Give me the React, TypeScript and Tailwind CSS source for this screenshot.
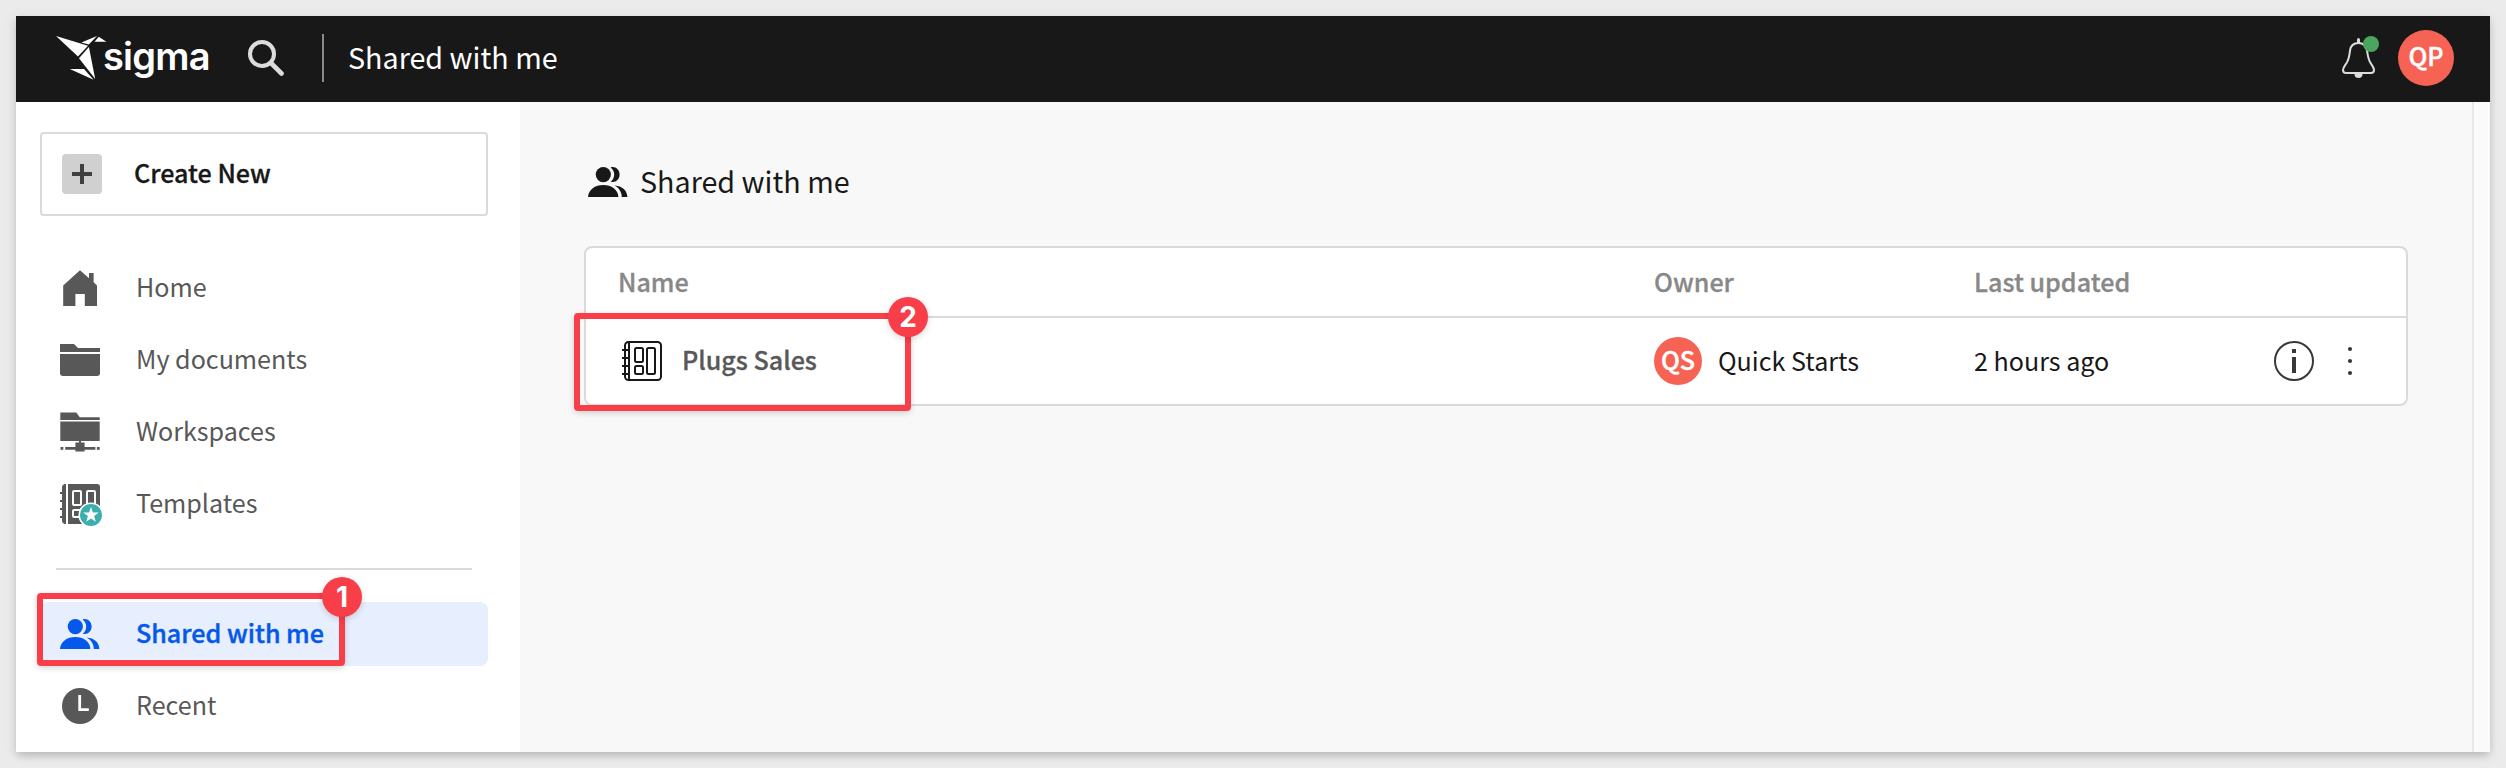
import type { ReactNode } from "react";

const GRAY = "#585858";

function SigmaBird() {
  return (
    <svg width="52" height="46" viewBox="0 0 52 46" fill="#fff">
      <path d="M0 0 L32 9.8 L22 20.6 Z" />
      <path d="M25.4 6.5 L41 0 L32.8 8.6 Z" />
      <path d="M42.7 0.7 L50.4 5.7 L38.6 5.7 Z" />
      <path d="M32.9 11 L39.2 43 L23 22.2 Z" />
      <path d="M13.8 33 L28 33 L37.6 43.7 Z" />
    </svg>
  );
}

function PeopleIcon({ color }: { color: string }) {
  return (
    <svg width="40" height="30" viewBox="0 0 40 30" fill={color}>
      <circle cx="15.3" cy="7.6" r="7.6" />
      <path d="M22.6 0.4 C27.5 -1 31.6 2.8 31.6 7.6 C31.6 12.6 27.4 16.2 22.8 14.8 C25 12.9 26.2 10.4 26.2 7.6 C26.2 4.7 25 2.2 22.6 0.4 Z" />
      <path d="M0 30 C0.5 22.5 7 18 15.3 18 C23.5 18 30 22.5 30.4 30 Z" />
      <path d="M26.6 18.6 C34.5 19.2 39 23.5 39.4 30 L33.8 30 C33.6 25 31 21 26.6 18.6 Z" />
    </svg>
  );
}

function HomeIcon() {
  return (
    <svg width="40" height="40" viewBox="0 0 40 40" fill={GRAY}>
      <path d="M20 2.2 L29 10.2 V5 H33.6 V14.2 L37 17.4 V38 H24.8 V26 H15.4 V38 H3.2 V17.4 Z" />
    </svg>
  );
}

function FolderIcon() {
  return (
    <svg width="40" height="40" viewBox="0 0 40 40" fill={GRAY}>
      <path d="M0 4 H14 L18 8 H40 V12 H0 Z" />
      <path d="M0 14 H40 V33 Q40 36 37 36 H3 Q0 36 0 33 Z" />
    </svg>
  );
}

function WorkspaceIcon() {
  return (
    <svg width="40" height="40" viewBox="0 0 40 40" fill={GRAY}>
      <path d="M0.3 0.4 H16.2 L19.8 5.2 H39.7 V8 H0.3 Z" />
      <path d="M0.3 9.6 H39.7 V29 H21 V30.4 H24.6 V35 H35.4 V37.8 H24.6 V39.6 H15.4 V37.8 H5.2 V35 H15.4 V30.4 H19 V29 H0.3 Z" />
      <rect x="0.5" y="35" width="2.8" height="2.8" />
      <rect x="36.9" y="35" width="2.8" height="2.8" />
    </svg>
  );
}

function TemplatesIcon() {
  return (
    <svg width="42" height="42" viewBox="0 0 42 42" className="mt-0.5">
      <path
        fill={GRAY}
        d="M4.5 0 H6 V40 H4.5 Q2 39 2 37 V34 H0 V32 H2 V26 H0 V24 H2 V18 H0 V16 H2 V10 H0 V8 H2 V3 Q2 1 4.5 0 Z M8 0 H37 Q40 0 40 3 V40 H8 Z"
      />
      <g fill="none" stroke="#fff" strokeWidth="2">
        <rect x="13" y="7" width="8" height="14" rx="1" />
        <rect x="27" y="7" width="8" height="14" rx="1" />
        <rect x="13" y="26" width="8" height="7" rx="1" />
      </g>
      <circle cx="31" cy="31" r="12.6" fill="#fff" />
      <circle cx="31" cy="31" r="11" fill="#3aafae" />
      <path
        fill="#fff"
        d="M31 23 L32.9 28.5 L38.8 28.6 L34.1 32.1 L35.8 37.7 L31 34.4 L26.2 37.7 L27.9 32.1 L23.2 28.6 L29.1 28.5 Z"
      />
    </svg>
  );
}

function ClockIcon() {
  return (
    <svg width="40" height="40" viewBox="0 0 40 40">
      <circle cx="20" cy="20" r="18" fill={GRAY} />
      <path d="M19.7 9 V23.6 H28.8" fill="none" stroke="#fff" strokeWidth="2.8" />
    </svg>
  );
}

function WorkbookIcon() {
  return (
    <svg width="40" height="40" viewBox="0 0 40 40" fill="none" stroke="#181818" strokeWidth="2">
      <rect x="3" y="1" width="36" height="38" rx="3.5" />
      <path d="M7 1 V39 M0 9 H7 M0 17 H7 M0 25 H7 M0 33 H7" />
      <rect x="13" y="7" width="8" height="14" rx="1.5" />
      <rect x="13" y="25" width="8" height="8" rx="1.5" />
      <rect x="25" y="7" width="8" height="26" rx="1.5" />
    </svg>
  );
}

function BellIcon() {
  return (
    <svg width="34" height="40" viewBox="0 0 34 40">
      <path d="M15 5 V2 Q15 0 16.5 0 Q18 0 18 2 V5 Z" fill="#dcdcdc" />
      <path
        d="M16.5 5 C11 5 8.6 8.5 8 12.5 C7.4 17 7.2 21 4.6 25 C2.6 28 1 29.5 1 32 C1 34.2 2 35 4 35 H29 C31 35 32 34.2 32 32 C32 29.5 30.4 28 28.6 25 C26 21 25.8 17 25 12.5 C24.2 8.5 22 5 16.5 5 Z"
        fill="none"
        stroke="#dcdcdc"
        strokeWidth="2"
      />
      <path d="M12.5 36 H20.5 Q20.5 40 16.5 40 Q12.5 40 12.5 36 Z" fill="#dcdcdc" />
    </svg>
  );
}

function Avatar({ label, className }: { label: string; className: string }) {
  return (
    <div
      className={`flex items-center justify-center rounded-full bg-[#f66254] pb-1 text-[25.1px] font-medium text-white [-webkit-text-stroke:0.4px] ${className}`}
    >
      {label}
    </div>
  );
}

function NavItem({ icon, label, active }: { icon: ReactNode; label: string; active?: boolean }) {
  return (
    <div
      className={
        active
          ? "flex h-16 items-center rounded-lg bg-[#e7eefd] pl-5 font-medium text-[#0458ea] [-webkit-text-stroke:0.4px]"
          : "flex h-16 items-center pl-5 text-[#585858]"
      }
    >
      <div className="flex w-[76px] shrink-0 items-center">{icon}</div>
      <span className="pb-1 text-[25.1px] leading-8">{label}</span>
    </div>
  );
}

function Callout({ n, className }: { n: number; className: string }) {
  return (
    <div className={`pointer-events-none absolute rounded-[4px] border-[6px] border-[#f73e49] shadow-[0_2px_6px_rgba(0,0,0,0.16)] ${className}`}>
      <div className="absolute -top-[22px] -right-[23px] flex h-10 w-10 items-center justify-center rounded-full bg-[#f73e49] font-['Inter',sans-serif] text-[28px] font-bold leading-none text-white shadow-[0_2px_6px_rgba(0,0,0,0.16)] [-webkit-text-stroke:0px]">
        {n}
      </div>
    </div>
  );
}

export default function App() {
  return (
    <div className="h-[768px] w-full overflow-hidden bg-[#ebebeb] p-4 font-['Noto_Sans_CJK_SC',sans-serif]">
      <div className="flex h-[736px] flex-col shadow-[0_4px_8px_-1px_rgba(0,0,0,0.2),0_2px_16px_rgba(0,0,0,0.06)]">
        <header className="flex h-[86px] shrink-0 items-center bg-[#181818] pr-9 pb-0.5 pl-10 text-white">
          <div className="flex w-[192px] items-center pt-0.5">
            <SigmaBird />
            <span className="-ml-[5px] pb-1.5 font-['Inter',sans-serif] text-[38px] font-semibold leading-[46px] tracking-[-0.02em]">
              sigma
            </span>
          </div>
          <svg width="36" height="36" viewBox="0 0 36 36" fill="none" stroke="#dcdcdc">
            <circle cx="14" cy="14" r="12" strokeWidth="4" />
            <path d="M23 23 L33.5 33.5" strokeWidth="4.6" strokeLinecap="round" />
          </svg>
          <div className="ml-[38px] h-12 w-0.5 bg-[#8a8a8a]" />
          <h1 className="ml-6 pb-[3px] text-[28.7px] leading-10">Shared with me</h1>
          <div className="relative ml-auto">
            <BellIcon />
            <div className="absolute -top-0.5 left-[21px] h-4 w-4 rounded-full bg-[#4ba55f]" />
          </div>
          <Avatar label="QP" className="ml-[22px] h-14 w-14" />
        </header>
        <div className="flex min-h-0 flex-1">
          <aside className="w-[504px] shrink-0 bg-white pt-[30px] pr-8 pl-6">
            <button className="flex h-[84px] w-full items-center rounded-[4px] border-2 border-[#dadada] pl-5 text-[#181818]">
              <svg width="40" height="40" viewBox="0 0 40 40">
                <rect width="40" height="40" rx="4" fill="#d0d0d0" />
                <path d="M20 10 V30 M10 20 H30" stroke="#404040" strokeWidth="4" />
              </svg>
              <span className="ml-8 pb-1 text-[25.1px] font-medium leading-8 [-webkit-text-stroke:0.3px]">Create New</span>
            </button>
            <nav className="flex flex-col gap-2 pt-10">
              <NavItem icon={<HomeIcon />} label="Home" />
              <NavItem icon={<FolderIcon />} label="My documents" />
              <NavItem icon={<WorkspaceIcon />} label="Workspaces" />
              <NavItem icon={<TemplatesIcon />} label="Templates" />
            </nav>
            <div className="mx-4 mt-8 h-0.5 bg-[#dadada]" />
            <nav className="flex flex-col gap-2 pt-8">
              <div className="relative">
                <NavItem icon={<PeopleIcon color="#0458ea" />} label="Shared with me" active />
                <Callout n={1} className="-top-[9px] -left-[3px] h-[73px] w-[308px]" />
              </div>
              <NavItem icon={<ClockIcon />} label="Recent" />
            </nav>
          </aside>
          <main className="flex-1 bg-[#f8f8f8] pt-[60px] pr-16 pl-16">
            <div className="flex h-10 items-center pl-1 text-[#181818]">
              <PeopleIcon color="#181818" />
              <h2 className="ml-3 pb-0.5 text-[28.7px] leading-10">Shared with me</h2>
            </div>
            <div className="mt-11 h-40 rounded-lg border-2 border-[#dadada] bg-white text-[25.1px] leading-8">
              <div className="flex h-[70px] items-center border-b-2 border-[#dadada] pb-[3px] pl-8 font-medium text-[#888] [-webkit-text-stroke:0.3px]">
                <span className="w-[1036px]">Name</span>
                <span className="w-[320px]">Owner</span>
                <span>Last updated</span>
              </div>
              <div className="relative flex h-[86px] items-center pl-9 text-[#181818]">
                <WorkbookIcon />
                <span className="ml-5 w-[972px] pb-1 font-medium text-[#585858] [-webkit-text-stroke:0.3px]">Plugs Sales</span>
                <Avatar label="QS" className="h-12 w-12" />
                <span className="ml-4 w-[256px] pb-0.5">Quick Starts</span>
                <span className="pb-[3px]">2 hours ago</span>
                <svg className="mr-[52px] ml-auto" width="80" height="40" viewBox="0 0 80 40" fill="#383838">
                  <circle cx="20" cy="20" r="19" fill="none" stroke="#383838" strokeWidth="2" />
                  <rect x="18" y="8" width="4" height="4" />
                  <rect x="18" y="16" width="4" height="16" />
                  <circle cx="76" cy="8" r="2.1" />
                  <circle cx="76" cy="20" r="2.1" />
                  <circle cx="76" cy="32" r="2.1" />
                </svg>
                <Callout n={2} className="-top-[5px] -left-[12px] h-[98px] w-[337px]" />
              </div>
            </div>
          </main>
          <div className="w-[18px] shrink-0 border-l-2 border-[#e8e8e8] bg-[#fafafa]" />
        </div>
      </div>
    </div>
  );
}
